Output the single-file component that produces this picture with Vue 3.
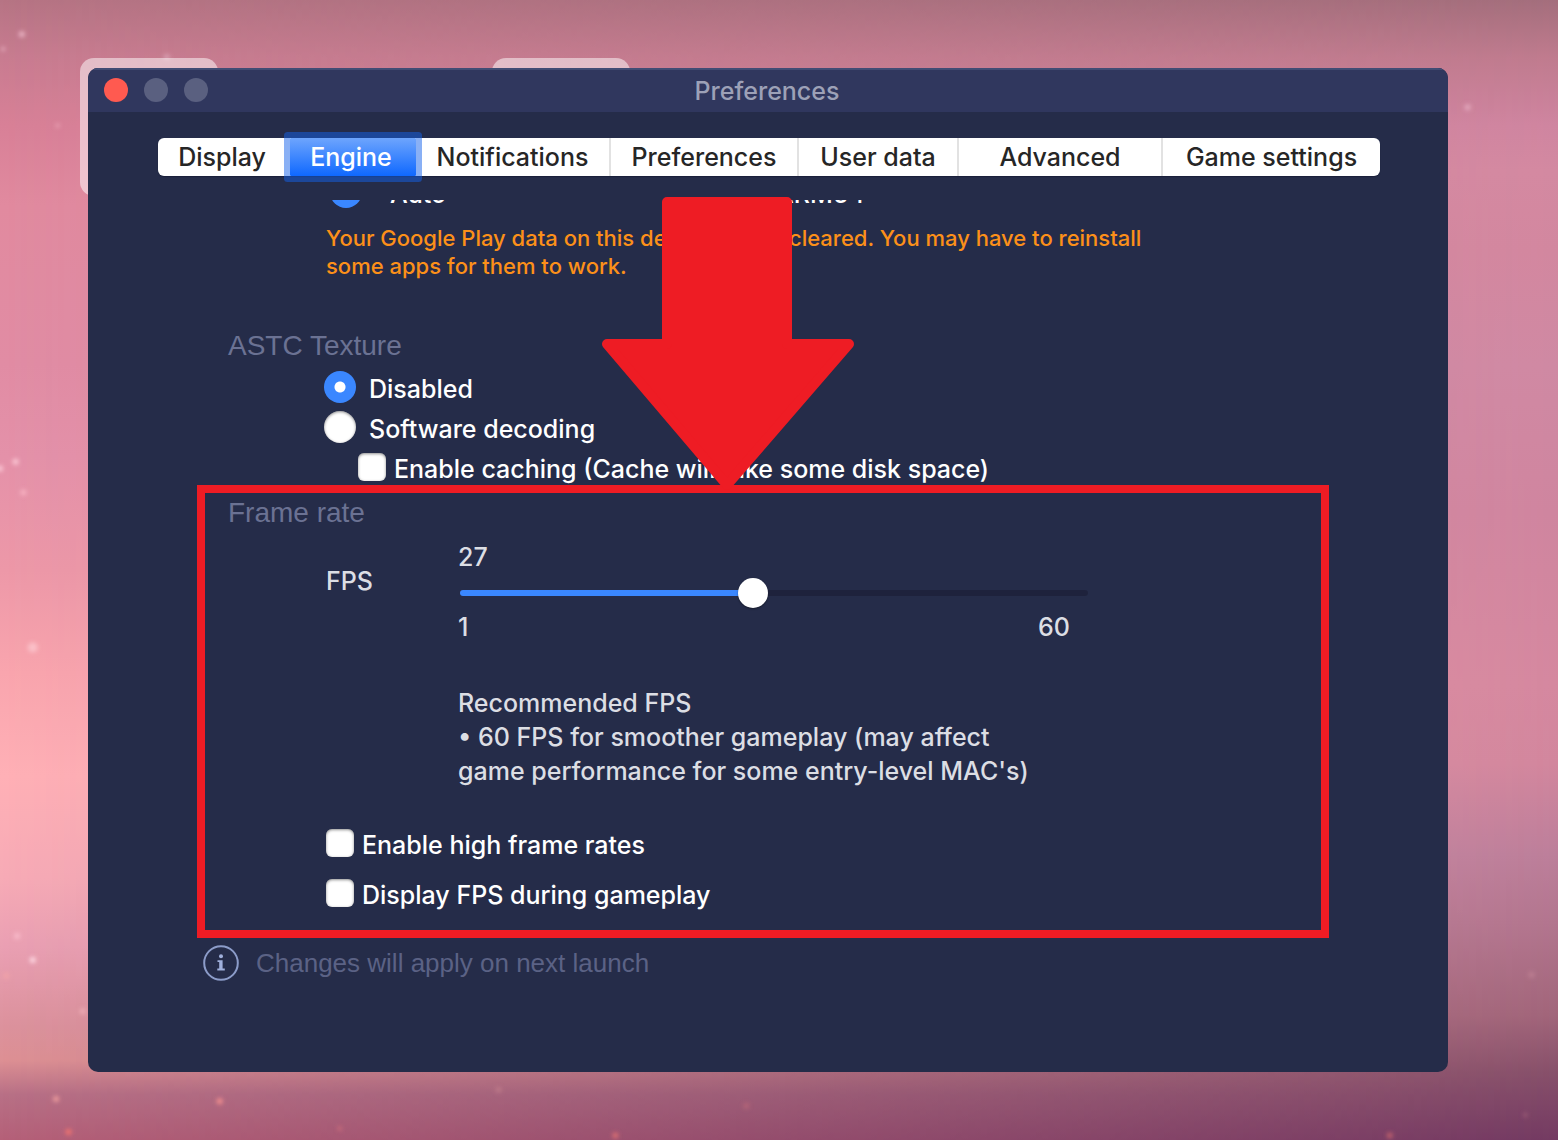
<script setup>
import { ref } from 'vue'

const tabs = ['Display', 'Engine', 'Notifications', 'Preferences', 'User data', 'Advanced', 'Game settings']
const activeTab = ref('Engine')

const abi = ref('auto')
const astc = ref('disabled')
const caching = ref(false)
const highFrameRates = ref(false)
const displayFps = ref(false)

const fps = ref(27)
const knob = 28.4
const fill = ((knob - 1) / 59) * 100

// Stars of the wallpaper: x%, y%, radius, colour
const stars = [
  [1.4, 3, 3, '#eab4c4'], [0.2, 4.3, 2, '#eab4c4'], [3.7, 11, 2, '#eba6b8'], [10.7, 5, 3, '#d9a0b2'],
  [94.2, 9.4, 3, '#e3a9bd'], [1, 40.5, 3, '#fcc9d6'], [0, 41.1, 3, '#fcc9d6'], [1.5, 43.2, 3, '#f7b3c2'],
  [2.1, 56.8, 5, '#fbc0c8'], [1.1, 82.1, 3, '#f9bccb'], [2.1, 84.2, 3, '#ffdbe4'], [0.4, 85.6, 3, '#f0a3a8'],
  [5.3, 88.7, 3, '#edabb5'], [3.6, 96.4, 3, '#ee9c9c'], [14.1, 96.6, 3, '#f5908f'], [4.4, 99.3, 3, '#f3736f'],
  [21.8, 99, 2, '#d5717c'], [39.5, 99.6, 3, '#dd6f72'], [47.9, 97, 3, '#b56577'], [32, 95.6, 3, '#bd7989'],
  [89.2, 99.6, 3, '#c0606c'], [98.3, 85.5, 3, '#bd7f92'], [97.9, 97.8, 2, '#a5627a']
]
</script>

<template>
  <div class="desktop">
    <svg class="stars" aria-hidden="true">
      <defs>
        <filter id="glow" x="-1" y="-1" width="3" height="3"><feGaussianBlur stdDeviation="2" /></filter>
      </defs>
      <circle
        v-for="(s, i) in stars"
        :key="i"
        :cx="s[0] + '%'"
        :cy="s[1] + '%'"
        :r="s[2]"
        :fill="s[3]"
        filter="url(#glow)"
      />
    </svg>
    <div class="tile tile-first"></div>
    <div class="tile tile-second"></div>

    <main class="window">
      <header class="titlebar">
        <div class="lights">
          <button class="light close" type="button" aria-label="Close"></button>
          <button class="light" type="button" aria-label="Minimize"></button>
          <button class="light" type="button" aria-label="Zoom"></button>
        </div>
        <h1 class="title">Preferences</h1>
      </header>

      <nav class="tabs">
        <button
          v-for="tab in tabs"
          :key="tab"
          type="button"
          class="tab"
          :class="{ active: tab === activeTab }"
          @click="activeTab = tab"
        >{{ tab }}</button>
      </nav>

      <div class="pane">
        <div class="abi">
          <label class="option"><input v-model="abi" type="radio" name="abi" value="auto" /><span>Auto</span></label>
          <label class="option"><input v-model="abi" type="radio" name="abi" value="arm64" /><span>ARM64</span></label>
        </div>
        <p class="warning">
          Your Google Play data on this device will be cleared. You may have to reinstall<br />some apps for them to work.
        </p>

        <h2 class="heading astc-heading">ASTC Texture</h2>
        <div class="astc">
          <label class="option"><input v-model="astc" type="radio" name="astc" value="disabled" /><span>Disabled</span></label>
          <label class="option"><input v-model="astc" type="radio" name="astc" value="software" /><span>Software decoding</span></label>
          <label class="option check nested"><input v-model="caching" type="checkbox" /><span>Enable caching (Cache will take some disk space)</span></label>
        </div>

        <section class="frame-rate">
          <h2 class="heading">Frame rate</h2>
          <div class="fps">
            <label class="fps-label" for="fps">FPS</label>
            <div class="fps-body">
              <output class="value" for="fps">{{ fps }}</output>
              <input
                id="fps"
                class="slider"
                type="range"
                min="1"
                max="60"
                step="any"
                :value="knob"
                :style="{ '--fill': fill + '%' }"
              />
              <div class="scale"><span>1</span><span>60</span></div>
              <p class="advice">
                Recommended FPS<br />• 60 FPS for smoother gameplay (may affect<br />game performance for some entry-level MAC's)
              </p>
            </div>
          </div>
          <div class="checks">
            <label class="option check"><input v-model="highFrameRates" type="checkbox" /><span>Enable high frame rates</span></label>
            <label class="option check"><input v-model="displayFps" type="checkbox" /><span>Display FPS during gameplay</span></label>
          </div>
        </section>
      </div>

      <footer class="note">
        <svg class="info" viewBox="0 0 36 36" aria-hidden="true">
          <circle cx="18" cy="18" r="16.8" fill="none" stroke="#8c9cc9" stroke-width="2" />
          <circle cx="18" cy="11.2" r="2" fill="#a0b0dc" />
          <path d="M14.5 15.2H19.6V23.6H21.8V25.4H14.3V23.6H16.2V17H14.5Z" fill="#a0b0dc" />
        </svg>
        <span>Changes will apply on next launch</span>
      </footer>

      <svg class="arrow" viewBox="0 0 252 294" aria-hidden="true">
        <path
          d="M65 5H185V147H247L125 288L5 147H65Z"
          fill="#ee1c24"
          stroke="#ee1c24"
          stroke-width="10"
          stroke-linejoin="round"
        />
      </svg>
    </main>
  </div>
</template>

<style>
body {
  margin: 0;
}
</style>

<style scoped>
.desktop {
  position: relative;
  box-sizing: border-box;
  min-height: 100vh;
  padding: 68px 110px 68px 88px;
  overflow: hidden;
  font-family: Inter, "Liberation Sans", sans-serif;
  font-size: 25px;
  font-weight: 500;
  line-height: 34px;
  background: linear-gradient(#b67484 0%, #c87c90 5%, #d88097 11%, #e18a9f 18%, #e18ca4 32%, #e491a9 40%, #ed98a8 50%, #f9a5ae 59%, #ffb0b6 68%, #f7abb6 77%, #eaa0b3 83%, #dc929d 90%, #dd9094 93%, #b87086 96%, #b56078 100%);
}

.desktop::before {
  content: "";
  position: absolute;
  inset: 0;
  background: linear-gradient(#a36e7c 0%, #bf7b8e 5%, #cf85a0 11%, #d389a1 15%, #d2879f 22%, #cf89a3 32%, #cf859f 45%, #d5889f 60%, #d2869d 67%, #bc7e9a 75%, #b2758e 81%, #a1657a 89%, #87506a 94%, #733a62 100%);
  -webkit-mask-image: linear-gradient(to right, transparent, #000);
  mask-image: linear-gradient(to right, transparent, #000);
}

.stars {
  position: absolute;
  inset: 0;
  width: 100%;
  height: 100%;
}

.tile {
  position: absolute;
  top: 58px;
  width: 138px;
  height: 138px;
  border-radius: 14px;
  background: rgba(255, 255, 255, 0.5);
}

.tile-first {
  left: 80px;
}

.tile-second {
  left: 492px;
}

.window {
  position: relative;
  box-sizing: border-box;
  min-height: calc(100vh - 136px);
  padding-bottom: 90px;
  border-radius: 10px;
  background: #252c49;
  overflow: hidden;
}

.titlebar {
  display: grid;
  grid-template-columns: 1fr auto 1fr;
  align-items: center;
  box-sizing: border-box;
  height: 44px;
  padding: 0 18px 0 16px;
  background: #30375e;
  box-shadow: inset 0 2px #414c74;
}

.lights {
  display: flex;
  gap: 16px;
}

.light {
  width: 24px;
  height: 24px;
  padding: 0;
  border: 0;
  border-radius: 50%;
  background: #5a6080;
}

.close {
  background: #ff5a50;
}

.title {
  margin: 0;
  padding-top: 2px;
  font-size: 25px;
  font-weight: 500;
  color: #9da1b7;
}

.tabs {
  display: grid;
  grid-template-columns: 132fr 126fr 195fr 188fr 160fr 204fr 217fr;
  margin: 26px 68px 0 70px;
  border-radius: 6px;
  background: #fff;
  box-shadow: 0 1px 1px #1a203a;
}

.tab {
  height: 38px;
  padding: 0;
  border: 0;
  border-right: 2px solid #e2e2e2;
  background: none;
  font: inherit;
  color: #262626;
  white-space: nowrap;
}

.tab:first-child {
  border-right: 4px solid transparent;
}

.tab:last-child {
  border-right: 0;
}

.tab.active {
  border: 0;
  border-radius: 1px;
  padding-right: 4px;
  background: linear-gradient(#6ea5fd, #0f68ff);
  box-shadow: 0 0 0 6px rgba(20, 98, 235, 0.5);
  color: #fff;
}

.pane {
  margin-top: 24px;
  padding: 0 119px 0 109px;
  overflow: hidden;
}

.abi {
  display: flex;
  gap: 288px;
  margin: -24px 0 0 133px;
}

.abi .option {
  width: 98px;
  gap: 28px;
}

.option {
  display: flex;
  align-items: center;
  gap: 13px;
  height: 32px;
  color: #fff;
  white-space: nowrap;
}

.option span {
  padding-top: 3px;
}

.option input {
  appearance: none;
  flex: none;
  box-sizing: border-box;
  width: 32px;
  height: 32px;
  margin: 0;
  border-radius: 50%;
  background: #fff;
  box-shadow: inset 0 1px 3px rgba(0, 0, 0, 0.45);
}

.option input[type="radio"]:checked {
  background: radial-gradient(circle, #fff 5px, #3a87ff 6px);
  box-shadow: none;
}

.check {
  gap: 8px;
}

.option input[type="checkbox"] {
  width: 28px;
  height: 28px;
  border-radius: 6px;
}

.option input[type="checkbox"]:checked {
  background: #3a87ff;
}

.warning {
  margin: 16px 0 0 129px;
  font-size: 22px;
  font-weight: 450;
  line-height: 28px;
  color: #fc9019;
  white-space: nowrap;
}

.heading {
  margin: 0;
  font-family: "Liberation Sans", Arial, sans-serif;
  font-size: 28px;
  font-weight: 400;
  line-height: 32px;
  color: #6b7293;
}

.astc-heading {
  margin: 50px 0 0 31px;
}

.astc {
  display: flex;
  flex-direction: column;
  gap: 8px;
  margin: 9px 0 2px 127px;
}

.nested {
  margin-left: 34px;
}

.frame-rate {
  padding: 4px 23px 21px;
  border: 8px solid #ee1c24;
}

.fps {
  display: flex;
  padding: 11px 0 0 98px;
}

.fps-label {
  width: 132px;
  padding-top: 24px;
  color: #dcdee4;
}

.fps-body {
  flex: 0 1 630px;
  color: #dcdee4;
}

.value {
  display: block;
}

.slider {
  appearance: none;
  display: block;
  width: calc(100% - 2px);
  height: 30px;
  margin: 4px 0 2px 2px;
  background: none;
}

.slider::-webkit-slider-runnable-track {
  height: 6px;
  border-radius: 3px;
  background: linear-gradient(to right, #3a87ff var(--fill), #1e223c var(--fill));
}

.slider::-webkit-slider-thumb {
  appearance: none;
  width: 30px;
  height: 30px;
  margin-top: -12px;
  border-radius: 50%;
  background: #fff;
  box-shadow: 0 1px 2px rgba(0, 0, 0, 0.4);
}

.scale {
  display: flex;
  justify-content: space-between;
  padding-right: 18px;
}

.advice {
  margin: 42px 0 0;
  white-space: nowrap;
}

.checks {
  display: flex;
  flex-direction: column;
  gap: 18px;
  padding: 39px 0 0 98px;
}

.note {
  display: flex;
  align-items: center;
  gap: 17px;
  margin: 7px 0 0 115px;
  font-family: "Liberation Sans", Arial, sans-serif;
  font-size: 26px;
  font-weight: 400;
  color: #5b6285;
}

.info {
  width: 36px;
  height: 36px;
}

.arrow {
  position: absolute;
  top: 129px;
  left: 514px;
  width: 252px;
  height: 294px;
}
</style>
